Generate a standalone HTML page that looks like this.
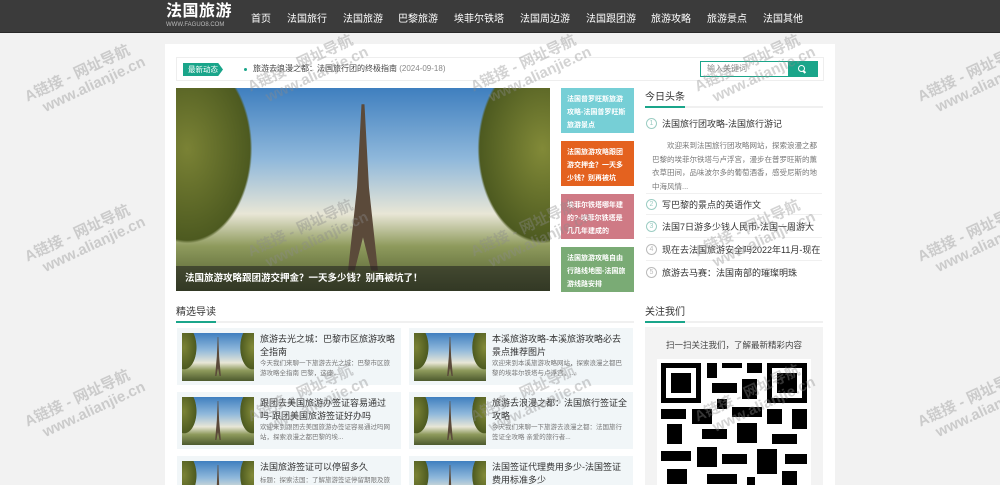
<!DOCTYPE html>
<html><head><meta charset="utf-8">
<style>
*{margin:0;padding:0;box-sizing:border-box}
html,body{width:1000px;height:485px;overflow:hidden}
body{background:#f2f2f2;font-family:"Liberation Sans","Noto Sans CJK SC",sans-serif;color:#333}
#root{position:relative;width:1000px;height:485px;overflow:hidden}
.hd{height:33px;background:#3b3b3b;border-bottom:1px solid #2a2a2a;position:relative}
.logo{position:absolute;left:166px;top:3px;color:#fff;font-size:16px;font-weight:bold;letter-spacing:0.5px;line-height:18px}
.logo small{display:block;font-size:6px;color:#bbb;font-weight:normal;letter-spacing:0;line-height:8px}
.nav span{position:absolute;top:10px;font-size:10px;color:#fff;white-space:nowrap}
.wrap{position:absolute;left:165px;top:44px;width:670px;height:441px;background:#fff}
.tk{position:absolute;left:176px;top:57px;width:648px;height:24px;border:1px solid #eee}
.tag{position:absolute;left:6px;top:5px;width:40px;height:13px;background:#1aa58a;color:#fff;font-size:7.5px;line-height:13px;padding-left:5px;clip-path:polygon(0 0,88% 0,100% 50%,88% 100%,0 100%)}
.tkt{position:absolute;left:76px;top:5px;font-size:8px;color:#444}
.tkt:before{content:"";position:absolute;left:-9px;top:5px;width:3px;height:3px;border-radius:50%;background:#1aa58a}
.sr{position:absolute;left:523px;top:3px;width:118px;height:16px;border:1px solid #1aa58a;font-size:8px;color:#888;line-height:14px;padding-left:6px}
.sr b{position:absolute;right:0;top:0;width:29px;height:14px;background:#1aa58a}
.sr b:before{content:"";position:absolute;left:10px;top:3px;width:5px;height:5px;border:1.5px solid #fff;border-radius:50%}
.sr b:after{content:"";position:absolute;left:15px;top:9px;width:3px;height:1.5px;background:#fff;transform:rotate(45deg)}
.pic{background:
 radial-gradient(ellipse 28% 75% at 3% 30%,#7a8235 0,#4d5a20 60%,transparent 62%),
 radial-gradient(ellipse 28% 75% at 98% 30%,#828a38 0,#4d5a20 60%,transparent 62%),
 linear-gradient(#3f7fbf 0%,#8fb8db 35%,#e8e6d6 62%,#8e9a5c 78%,#4d5a2e 100%);position:absolute;overflow:hidden}
.pic:after{content:"";position:absolute;left:46%;top:8%;width:8%;height:82%;background:#5b4a3a;clip-path:polygon(45% 0,55% 0,70% 50%,100% 100%,78% 100%,50% 80%,22% 100%,0 100%,30% 50%)}
.main{left:176px;top:88px;width:374px;height:203px}
.cap{position:absolute;left:176px;top:266px;width:374px;height:25px;background:rgba(30,30,30,.55);color:#fff;font-size:9.5px;font-weight:bold;line-height:25px;padding-left:9px;z-index:2}
.sb{position:absolute;left:561px;width:73px;height:45px;color:#fff;font-size:7px;font-weight:bold;line-height:13px;padding:5px 6px}
.h2{position:absolute;font-size:10px;color:#333;border-bottom:2px solid #f0f0f0}
.h2 i{position:absolute;left:0;bottom:-2px;width:40px;height:2px;background:#1aa58a}
.li{position:absolute;left:646px;width:176px;font-size:9px;color:#333;height:22px;line-height:22px;border-bottom:1px solid #f0f0f0;padding-left:16px;white-space:nowrap;overflow:hidden}
.li em{position:absolute;left:0;top:5px;width:11px;height:11px;border:1px solid #9ccdc3;border-radius:50%;font-style:normal;font-size:7px;line-height:9px;text-align:center;color:#9ccdc3}
.li.g em{border-color:#bbb;color:#bbb}
.desc{position:absolute;left:652px;top:139px;width:172px;font-size:7.5px;line-height:13.5px;color:#777;text-indent:2em}
.cd{position:absolute;width:224px;height:57px;background:#f1f6f8;overflow:hidden}
.cd .pic{left:5px;top:5px;width:72px;height:48px}
.cd h4{position:absolute;left:83px;top:5px;width:135px;font-size:9px;font-weight:normal;line-height:12.5px;color:#333}
.cd p{position:absolute;left:83px;top:31px;width:135px;font-size:6.5px;line-height:10px;color:#777}
.qb{position:absolute;left:645px;top:327px;width:178px;height:158px;background:#f3f3f3;overflow:hidden}
.qb p{text-align:center;font-size:8.5px;color:#444;margin-top:12px}
.wm{position:absolute;color:rgba(140,140,140,.38);font-weight:bold;font-size:15px;transform:rotate(-25deg);transform-origin:0 0;white-space:nowrap;z-index:5;line-height:17px}
.wm span{display:block;padding-left:12px}
</style></head><body><div id="root">
<div class="hd"><div class="logo">法国旅游<small>WWW.FAGUO8.COM</small></div>
<div class="nav"><span style="left:251px">首页</span><span style="left:287px">法国旅行</span><span style="left:343px">法国旅游</span><span style="left:398px">巴黎旅游</span><span style="left:454px">埃菲尔铁塔</span><span style="left:520px">法国周边游</span><span style="left:586px">法国跟团游</span><span style="left:651px">旅游攻略</span><span style="left:707px">旅游景点</span><span style="left:763px">法国其他</span></div></div>
<div class="wrap"></div>
<div class="tk"><div class="tag">最新动态</div><div class="tkt">旅游去浪漫之都：法国旅行团的终极指南 <span style="color:#888">(2024-09-18)</span></div><div class="sr">输入关键词<b></b></div></div>
<div class="pic main"></div>
<div class="cap">法国旅游攻略跟团游交押金？一天多少钱？别再被坑了！</div>
<div class="sb" style="top:88px;background:#76cfd6">法国普罗旺斯旅游攻略-法国普罗旺斯旅游景点</div>
<div class="sb" style="top:141px;background:#e4621f">法国旅游攻略跟团游交押金？一天多少钱？别再被坑</div>
<div class="sb" style="top:194px;background:#cf7a85">埃菲尔铁塔哪年建的?-埃菲尔铁塔是几几年建成的</div>
<div class="sb" style="top:247px;background:#7aab75">法国旅游攻略自由行路线地图-法国旅游线路安排</div>
<div class="h2" style="left:645px;top:88px;width:178px;height:20px">今日头条<i></i></div>
<div class="li" style="top:113px;border:none"><em>1</em>法国旅行团攻略-法国旅行游记</div>
<div class="desc">欢迎来到法国旅行团攻略网站，探索浪漫之都巴黎的埃菲尔铁塔与卢浮宫，漫步在普罗旺斯的薰衣草田间，品味波尔多的葡萄酒香，感受尼斯的地中海风情...</div>
<div class="li" style="top:193px;border-top:1px solid #f0f0f0"><em>2</em>写巴黎的景点的英语作文</div>
<div class="li" style="top:216px"><em>3</em>法国7日游多少钱人民币-法国一周游大</div>
<div class="li g" style="top:239px"><em>4</em>现在去法国旅游安全吗2022年11月-现在</div>
<div class="li g" style="top:262px;border:none"><em>5</em>旅游去马赛：法国南部的璀璨明珠</div>
<div class="h2" style="left:176px;top:303px;width:458px;height:20px">精选导读<i></i></div>
<div class="h2" style="left:645px;top:303px;width:178px;height:20px">关注我们<i></i></div>
<div class="cd" style="left:177px;top:328px"><div class="pic"></div><h4>旅游去光之城：巴黎市区旅游攻略全指南</h4><p>今天我们来聊一下旅游去光之城：巴黎市区旅游攻略全指南 巴黎，这座...</p></div>
<div class="cd" style="left:409px;top:328px"><div class="pic"></div><h4>本溪旅游攻略-本溪旅游攻略必去景点推荐图片</h4><p>欢迎来到本溪旅游攻略网站，探索浪漫之都巴黎的埃菲尔铁塔与卢浮宫，...</p></div>
<div class="cd" style="left:177px;top:392px"><div class="pic"></div><h4>跟团去美国旅游办签证容易通过吗-跟团美国旅游签证好办吗</h4><p>欢迎来到跟团去美国旅游办签证容易通过吗网站，探索浪漫之都巴黎的埃...</p></div>
<div class="cd" style="left:409px;top:392px"><div class="pic"></div><h4>旅游去浪漫之都：法国旅行签证全攻略</h4><p>今天我们来聊一下旅游去浪漫之都：法国旅行签证全攻略 亲爱的旅行者...</p></div>
<div class="cd" style="left:177px;top:456px;height:29px"><div class="pic"></div><h4>法国旅游签证可以停留多久</h4><p style="top:20px">标题：探索法国：了解旅游签证停留期限及旅</p></div>
<div class="cd" style="left:409px;top:456px;height:29px"><div class="pic"></div><h4>法国签证代理费用多少-法国签证费用标准多少</h4></div>
<div class="qb"><p>扫一扫关注我们，了解最新精彩内容</p>
<svg style="position:absolute;left:12px;top:32px" width="154" height="126" viewBox="0 0 154 126">
<rect width="154" height="130" fill="#fff"/>
<g fill="#000">
<rect x="4" y="4" width="40" height="40"/><rect x="9" y="9" width="30" height="30" fill="#fff"/><rect x="14" y="14" width="20" height="20"/>
<rect x="110" y="4" width="40" height="40"/><rect x="115" y="9" width="30" height="30" fill="#fff"/><rect x="120" y="14" width="20" height="20"/>
<rect x="50" y="4" width="10" height="15"/><rect x="65" y="4" width="20" height="5"/><rect x="90" y="4" width="15" height="10"/><rect x="55" y="24" width="25" height="10"/><rect x="85" y="20" width="15" height="20"/><rect x="60" y="40" width="10" height="10"/>
<rect x="4" y="50" width="25" height="10"/><rect x="35" y="50" width="20" height="15"/><rect x="75" y="48" width="30" height="10"/><rect x="110" y="50" width="15" height="15"/><rect x="135" y="50" width="15" height="20"/>
<rect x="10" y="65" width="15" height="20"/><rect x="45" y="70" width="25" height="10"/><rect x="80" y="64" width="20" height="20"/><rect x="115" y="75" width="25" height="10"/>
<rect x="4" y="92" width="30" height="10"/><rect x="40" y="88" width="20" height="20"/><rect x="65" y="95" width="25" height="10"/><rect x="100" y="90" width="20" height="25"/><rect x="128" y="95" width="22" height="10"/>
<rect x="10" y="110" width="20" height="15"/><rect x="50" y="115" width="30" height="10"/><rect x="90" y="118" width="8" height="8"/><rect x="125" y="112" width="15" height="14"/>
</g></svg></div>
<div class="wm" style="left:22px;top:90px">A链接 - 网址导航<span>www.alianjie.cn</span></div>
<div class="wm" style="left:22px;top:250px">A链接 - 网址导航<span>www.alianjie.cn</span></div>
<div class="wm" style="left:22px;top:415px">A链接 - 网址导航<span>www.alianjie.cn</span></div>
<div class="wm" style="left:245px;top:80px">A链接 - 网址导航<span>www.alianjie.cn</span></div>
<div class="wm" style="left:245px;top:245px">A链接 - 网址导航<span>www.alianjie.cn</span></div>
<div class="wm" style="left:245px;top:410px">A链接 - 网址导航<span>www.alianjie.cn</span></div>
<div class="wm" style="left:468px;top:80px">A链接 - 网址导航<span>www.alianjie.cn</span></div>
<div class="wm" style="left:468px;top:245px">A链接 - 网址导航<span>www.alianjie.cn</span></div>
<div class="wm" style="left:468px;top:410px">A链接 - 网址导航<span>www.alianjie.cn</span></div>
<div class="wm" style="left:692px;top:80px">A链接 - 网址导航<span>www.alianjie.cn</span></div>
<div class="wm" style="left:692px;top:245px">A链接 - 网址导航<span>www.alianjie.cn</span></div>
<div class="wm" style="left:692px;top:410px">A链接 - 网址导航<span>www.alianjie.cn</span></div>
<div class="wm" style="left:915px;top:90px">A链接 - 网址导航<span>www.alianjie.cn</span></div>
<div class="wm" style="left:915px;top:250px">A链接 - 网址导航<span>www.alianjie.cn</span></div>
<div class="wm" style="left:915px;top:415px">A链接 - 网址导航<span>www.alianjie.cn</span></div>
</div></body></html>
